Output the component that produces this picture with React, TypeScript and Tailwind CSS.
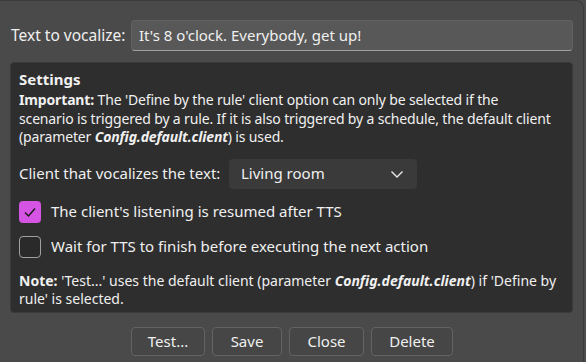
export default function App() {
  return (
    <div
      className="w-[586px] h-[362px] bg-[#4d4d4d] overflow-hidden"
      style={{ fontFamily: '"Noto Sans", "Open Sans", sans-serif' }}
    >
      <div className="w-[584px] h-[362px] bg-[#4a4a4a] rounded-tr-lg border-t border-r border-[#3b3b3b] flex flex-col text-[#f0f0f0]">
        <div className="flex items-center pl-[11px] pt-[19px] pr-[10px]">
          <span className="text-[15.5px] w-[120px]">Text to vocalize:</span>
          <div className="flex-1 h-[31px] bg-[#585858] rounded-[4px] border border-[#616161] border-b-[#a0a0a0] flex items-center pl-[7px] text-[15px]">
            It's 8 o'clock. Everybody, get up!
          </div>
        </div>
        <div className="mx-[10px] mt-[11px] h-[251px] bg-[#2e2e2e] rounded-[4px] border border-[#3a3a3a] px-[8px] pt-[5px] text-[14px] leading-[18.5px]">
          <div className="font-bold text-[15px] leading-[22px]">Settings</div>
          <p className="mt-[1px] whitespace-nowrap tracking-[-0.15px]">
            <b>Important:</b> The 'Define by the rule' client option can only be selected if the
            <br />
            scenario is triggered by a rule. If it is also triggered by a schedule, the default client
            <br />
            (parameter <b><i>Config.default.client</i></b>) is used.
          </p>
          <div className="flex items-center mt-[12px] text-[15px]">
            <span className="w-[210px]">Client that vocalizes the text:</span>
            <div className="w-[188px] h-[30px] bg-[#3a3a3a] rounded-[4px] flex items-center justify-between pl-[12px] pr-[13px]">
              <span>Living room</span>
              <svg width="14" height="14" viewBox="0 0 14 14" fill="none" stroke="#e8e8e8" strokeWidth="1.4">
                <path d="M1.5 4.5 L7 10 L12.5 4.5" />
              </svg>
            </div>
          </div>
          <div className="flex items-center mt-[12px] text-[15px]">
            <div className="w-[22px] h-[22px] rounded-[4px] bg-[#d654e3] flex items-center justify-center">
              <svg width="14" height="14" viewBox="0 0 14 14" fill="none" stroke="#1a1a1a" strokeWidth="1.5">
                <path d="M2 7.5 L5.5 11 L12 3.5" />
              </svg>
            </div>
            <span className="ml-[10px]">The client's listening is resumed after TTS</span>
          </div>
          <div className="flex items-center mt-[13px] text-[15px]">
            <div className="w-[22px] h-[22px] rounded-[4px] border border-[#a0a0a0] bg-[#2a2a2a]" />
            <span className="ml-[10px]">Wait for TTS to finish before executing the next action</span>
          </div>
          <p className="mt-[14px] whitespace-nowrap">
            <b>Note:</b> 'Test...' uses the default client (parameter <b><i>Config.default.client</i></b>) if 'Define by
            <br />
            rule' is selected.
          </p>
        </div>
        <div className="flex justify-center gap-[7px] mt-[14px] pl-[1px] text-[15px]">
          <button className="w-[74px] h-[29px] bg-[#464646] border border-[#636363] rounded-[4px]">Test...</button>
          <button className="w-[70px] h-[29px] bg-[#464646] border border-[#636363] rounded-[4px]">Save</button>
          <button className="w-[75px] h-[29px] bg-[#464646] border border-[#636363] rounded-[4px]">Close</button>
          <button className="w-[82px] h-[29px] bg-[#464646] border border-[#636363] rounded-[4px]">Delete</button>
        </div>
      </div>
    </div>
  );
}
